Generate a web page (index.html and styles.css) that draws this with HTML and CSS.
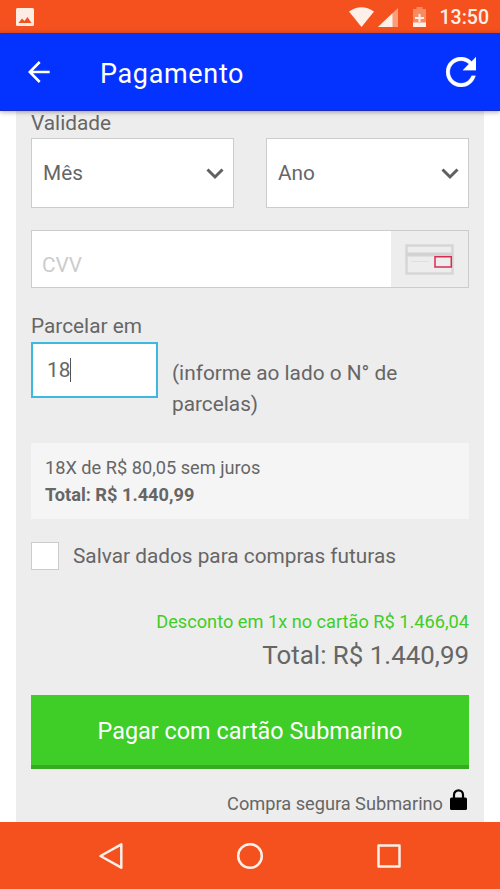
FILE: index.html
```html
<!DOCTYPE html>
<html lang="pt-BR">
<head>
<meta charset="utf-8">
<title>Pagamento</title>
<link rel="stylesheet" href="styles.css">
</head>
<body>
<div class="status">
  <svg class="status-photo" width="18" height="18" viewBox="0 0 18 18"><rect width="18" height="18" rx="1.5" fill="#fdece3"/><path d="M2.500 15 6 10.500l2.500 2.500L11.500 9l4 6z" fill="#f5511e"/></svg>
  <svg width="25" height="20" viewBox="0 0 25 20"><path d="M0 4.500Q12.500-4 25 4.500L12.500 20z" fill="#fdf0e8"/></svg>
  <svg class="status-signal" width="20" height="19" viewBox="0 0 20 19"><path d="M20 0v19H0z" fill="#fa9d7b"/><path d="M14.500 5.200V19H0z" fill="#fdf0e8"/></svg>
  <svg class="status-battery" width="13" height="20" viewBox="0 0 13 20"><path d="M3.500 0h6v2H13v18H0V2h3.500z" fill="#f98a62"/><path d="M0 15.500h13V20H0zM5.500 7h2v3H11v2H7.500v3h-2v-3H2v-2h3.500z" fill="#fdf0e8"/></svg>
  <span class="clock">13:50</span>
</div>
<header class="appbar">
  <svg class="back" width="22" height="22" viewBox="0 0 22 22" fill="none" stroke="#fff" stroke-width="2.600"><path d="M21.700 11H2M11.700 1 1.800 11l9.900 10"/></svg>
  <h1>Pagamento</h1>
  <svg class="reload" width="30" height="30" viewBox="4 4 16 16"><path d="M17.650 6.350C16.200 4.900 14.210 4 12 4c-4.420 0-7.990 3.580-7.990 8s3.570 8 7.990 8c3.730 0 6.840-2.550 7.730-6h-2.080c-.82 2.330-3.040 4-5.650 4-3.310 0-6-2.690-6-6s2.690-6 6-6c1.660 0 3.140.69 4.220 1.780L13 11h7V4z" fill="#fff" stroke="#fff" stroke-width=".15"/></svg>
</header>
<main class="card">
  <div class="label first">Validade</div>
  <div class="selects">
    <div class="select"><span>Mês</span><svg width="18" height="12" viewBox="0 0 18 12" fill="none" stroke="#606060" stroke-width="3"><path d="m1.500 1.500 7.500 7.500 7.500-7.500"/></svg></div>
    <div class="select"><span>Ano</span><svg width="18" height="12" viewBox="0 0 18 12" fill="none" stroke="#606060" stroke-width="3"><path d="m1.500 1.500 7.500 7.500 7.500-7.500"/></svg></div>
  </div>
  <div class="cvv">
    <span class="placeholder">CVV</span>
    <div class="addon"><svg width="50" height="32" viewBox="0 0 50 32" fill="none"><path d="M1.500 1.500h46v28h-46z" stroke="#d6d6d6" stroke-width="2.500"/><path d="M1 10.500h47" stroke="#d3d3d3" stroke-width="4"/><path d="M6 17.500h18" stroke="#dfdfdf"/><path d="M30 12.700h16.300v10.300H30z" fill="#ededed" stroke="#d82c50" stroke-width="1.500"/></svg></div>
  </div>
  <div class="label parcel">Parcelar em</div>
  <div class="install">
    <div class="field">18<i class="caret"></i></div>
    <p>(informe ao lado o N° de<br>parcelas)</p>
  </div>
  <div class="summary"><div class="line">18X de R$ 80,05 sem juros</div><div class="bold">Total: R$ 1.440,99</div></div>
  <div class="save"><span class="check"></span><span>Salvar dados para compras futuras</span></div>
  <div class="discount">Desconto em 1x no cartão R$ 1.466,04</div>
  <div class="total">Total: R$ 1.440,99</div>
  <div class="pay">Pagar com cartão Submarino</div>
  <div class="secure"><span>Compra segura Submarino</span><svg width="17" height="22" viewBox="0 0 17 22"><path d="M4 10V5.800a4.500 4.500 0 0 1 9 0V10" fill="none" stroke="#000" stroke-width="2.200"/><rect y="8.500" width="17" height="12.500" rx="1.500"/></svg></div>
</main>
<nav class="nav">
  <svg width="28" height="28" viewBox="0 0 28 28"><path d="M24.300 2.300v23.400L3.500 14z"/></svg>
  <svg width="28" height="28" viewBox="0 0 28 28"><circle cx="14" cy="14" r="11.800"/></svg>
  <svg width="28" height="28" viewBox="0 0 28 28"><rect x="3.500" y="3.500" width="21" height="21"/></svg>
</nav>
</body>
</html>
```
FILE: styles.css
```css
* { box-sizing: border-box; }
body { margin: 0; width: 500px; height: 889px; overflow: hidden; display: flex; flex-direction: column; background: #fff; font-family: Roboto, sans-serif; font-size: 20.800px; color: #666; white-space: nowrap; }
svg { display: block; flex: none; }
.status { height: 33px; flex: none; display: flex; align-items: center; padding: 0 11px 0 16px; background: #f5511e; color: #fdf0e8; }
.status-photo { margin-right: auto; }
.status .status-signal { margin: 1px 1px 0 4px; }
.status-battery { margin-left: 14px; }
.clock { margin-left: 14px; font-size: 19.500px; font-weight: 500; line-height: 33px; padding-top: 2px; }
.appbar { position: relative; height: 78px; flex: none; display: flex; align-items: center; padding: 0 24px 0 28px; background: #0433ff; border-bottom: 1px solid #1b2bbb; box-shadow: 0 1px 5px rgba(0,0,0,.35); color: #fff; }
.appbar h1 { margin: 5px auto 0 50px; font-size: 27px; font-weight: 400; letter-spacing: .65px; line-height: 36px; }
.card { height: 711px; flex: none; margin: 0 16px; padding: 0 15px; background: #ededed; }
.label { line-height: 24px; }
.first { height: 27px; }
.selects { display: flex; justify-content: space-between; }
.select { width: 203px; height: 70px; display: flex; align-items: center; justify-content: space-between; padding: 0 9px 0 11px; background: #fff; border: 1px solid #ccc; }
.select svg { margin-top: 2px; }
.cvv { display: flex; height: 58px; margin-top: 22px; background: #fff; border: 1px solid #ccc; }
.placeholder { flex: 1; padding: 6px 0 0 10px; line-height: 56px; color: #ccc; }
.addon { width: 77px; padding: 13px 0 0 14px; background: #ededed; }
.parcel { margin-top: 26px; height: 28px; }
.install { display: flex; height: 56px; }
.field { display: flex; align-items: center; width: 127px; height: 56px; padding-left: 14px; background: #fff; border: 2px solid #3db9df; }
.caret { width: 1px; height: 24px; background: #555; }
.install p { margin: 16px 0 0 14px; line-height: 31px; }
.summary { height: 76px; margin-top: 45px; padding: 11px 14px; background: #f5f5f5; font-size: 18.200px; line-height: 27px; }
.bold { font-weight: 700; }
.save { display: flex; align-items: center; height: 28px; margin-top: 23px; }
.check { width: 28px; height: 28px; margin-right: 14px; background: #fff; border: 1px solid #ccc; }
.discount { margin-top: 40px; height: 25px; line-height: 24px; font-size: 18.200px; color: #3fcd27; text-align: right; }
.total { height: 42px; line-height: 40px; font-size: 25.900px; text-align: right; }
.pay { height: 74px; margin-top: 18px; line-height: 73px; font-size: 23.400px; text-align: center; color: #fff; background: #3fcd27; border-bottom: 4px solid #36ab22; }
.secure { display: flex; justify-content: flex-end; align-items: center; gap: 7px; height: 34px; margin-top: 17px; padding-right: 2px; font-size: 18.200px; }
.secure svg { margin-top: -6px; }
.nav { height: 67px; flex: none; display: flex; justify-content: center; align-items: center; gap: 111px; background: #f5511e; }
.nav svg { fill: none; stroke: #fdf0e8; stroke-width: 2.500; stroke-linejoin: round; }
```
